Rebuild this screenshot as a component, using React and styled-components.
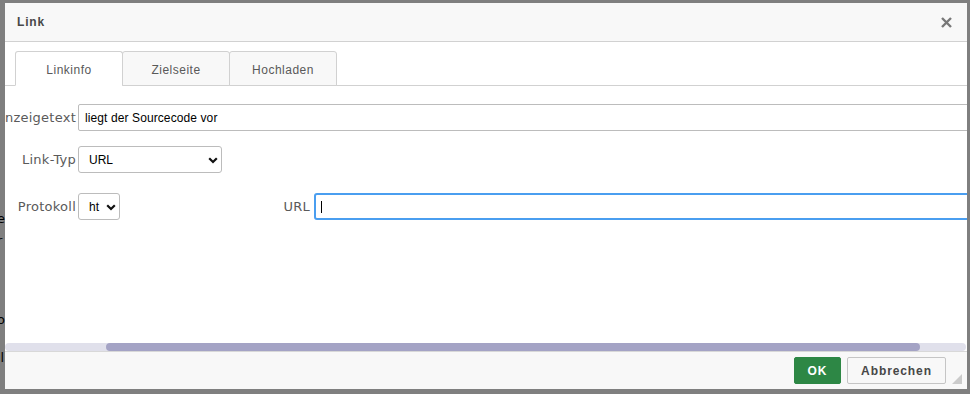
import React, { useLayoutEffect, useRef, useState } from 'react';
import styled, { createGlobalStyle } from 'styled-components';

const GlobalStyle = createGlobalStyle`
  html, body {
    margin: 0;
    padding: 0;
  }
  body {
    width: 970px;
    height: 394px;
    overflow: hidden;
    background: #fff;
    font-family: "Liberation Sans", Arial, sans-serif;
  }
`;

// bits of the page that peek out from behind the dialog
const pageLines = [
  { text: 'er', gap: 211 },
  { text: 'r', gap: 6 },
  { text: 'o', gap: 63 },
  { text: 'il', gap: 22 },
];

const Page = styled.div`
  display: flex;
  flex-direction: column;
  font-family: "DejaVu Sans", sans-serif;
  font-size: 13px;
  line-height: 16px;
  color: #000;
`;

const PageLine = styled.div`
  margin-top: ${(p) => p.$gap}px;
  margin-left: -3px;
`;

const Cover = styled.div`
  position: fixed;
  inset: 0;
  background: rgba(0, 0, 0, 0.5);
`;

const Dialog = styled.div`
  position: absolute;
  left: 5px;
  top: 3px;
  width: 962px;
  height: 386px;
  background: #fff;
  display: flex;
  flex-direction: column;
  overflow: hidden;
`;

const Header = styled.div`
  height: 38px;
  flex: none;
  display: flex;
  align-items: center;
  justify-content: space-between;
  padding: 0 15px 0 12px;
  background: #f8f8f8;
  border-bottom: 1px solid #d1d1d1;
`;

const Title = styled.div`
  font-size: 12px;
  font-weight: bold;
  letter-spacing: 0.8px;
  color: #484848;
`;

const CloseIcon = () => (
  <svg width="11" height="11" viewBox="0 0 11 11">
    <path d="M1 1 L10 10 M10 1 L1 10" stroke="#787878" strokeWidth="2.4" />
  </svg>
);

const TabBar = styled.div`
  flex: none;
  display: flex;
  padding: 9px 0 0 10px;
  border-bottom: 1px solid #d1d1d1;
`;

const Tab = styled.div`
  box-sizing: border-box;
  width: 108px;
  height: 35px;
  margin-bottom: -1px;
  margin-left: ${(p) => (p.$first ? 0 : -1)}px;
  display: flex;
  align-items: center;
  justify-content: center;
  padding-top: 3px;
  border: 1px solid #d1d1d1;
  border-bottom-color: ${(p) => (p.$active ? '#fff' : '#d1d1d1')};
  border-radius: 3px 3px 0 0;
  background: ${(p) => (p.$active ? '#fff' : '#f8f8f8')};
  font-size: 12px;
  letter-spacing: 0.5px;
  color: #595959;
`;

const ScrollArea = styled.div`
  flex: none;
  height: 257px;
  overflow-x: hidden;
  overflow-y: hidden;
`;

const ScrollTrack = styled.div`
  flex: none;
  height: 8px;
  margin-right: 1px;
  border-radius: 4px;
  background: #e0e0eb;
  display: flex;
`;

const ScrollThumb = styled.div`
  height: 8px;
  border-radius: 4px;
  background: #a4a3c5;
`;

const Form = styled.div`
  box-sizing: border-box;
  width: 1135px;
  padding: 18px 10px 0 0;
  display: flex;
  flex-direction: column;
`;

const Row = styled.div`
  display: grid;
  grid-template-columns: 190px 1fr;
  column-gap: 2px;
  align-items: center;
  margin-top: ${(p) => p.$gap || 0}px;
`;

const Label = styled.label`
  text-align: right;
  width: ${(p) => (p.$w ? `${p.$w}px` : 'auto')};
  flex: none;
  white-space: nowrap;
  font-family: "DejaVu Sans", sans-serif;
  font-size: 13px;
  letter-spacing: 0.25px;
  color: #5a5a5a;
`;

const TextInput = styled.input`
  box-sizing: border-box;
  height: 27px;
  width: 100%;
  padding: 0 6px;
  border: 1px solid #bcbcbc;
  border-radius: 2px;
  background: #fff;
  outline: none;
  font-family: "Liberation Sans", Arial, sans-serif;
  font-size: 12px;
  letter-spacing: 0.1px;
  color: #000;
`;

const SelectWrap = styled.div`
  position: relative;
  width: ${(p) => p.$w}px;
  flex: none;
`;

const Select = styled.select`
  appearance: none;
  box-sizing: border-box;
  width: 100%;
  height: 27px;
  padding: 0 0 0 10px;
  border: 1px solid #bcbcbc;
  border-radius: 3px;
  background: #fff;
  outline: none;
  font-family: "Liberation Sans", Arial, sans-serif;
  font-size: 12px;
  color: #000;
`;

const ChevronBox = styled.svg`
  position: absolute;
  right: 4px;
  top: 11px;
  pointer-events: none;
`;

const Chevron = () => (
  <ChevronBox width="10" height="7" viewBox="0 0 10 7">
    <path d="M1.2 1.2 L5 5 L8.8 1.2" fill="none" stroke="#111" strokeWidth="2.2" />
  </ChevronBox>
);

const FieldLine = styled.div`
  display: flex;
  align-items: center;
`;

const ProtoCell = styled.div`
  width: 190px;
  flex: none;
`;

const UrlField = styled.div`
  box-sizing: border-box;
  flex: 1;
  height: 27px;
  margin-left: 4px;
  padding-left: 5px;
  display: flex;
  align-items: center;
  border: 2px solid #4a9ef0;
  border-radius: 3px;
  background: #fff;
`;

const Caret = styled.span`
  width: 1px;
  height: 12px;
  background: #000;
`;

const Footer = styled.div`
  position: relative;
  flex: 1;
  display: flex;
  justify-content: flex-end;
  align-items: flex-start;
  gap: 6px;
  padding: 5px 21px 0 0;
  background: #f8f8f8;
  border-top: 1px solid #d8d8d8;
`;

const Button = styled.button`
  box-sizing: border-box;
  height: 27px;
  width: ${(p) => p.$w}px;
  border-radius: 2px;
  border: 1px solid ${(p) => (p.$primary ? '#2d8745' : '#c5c5c5')};
  background: ${(p) => (p.$primary ? '#2d8745' : '#f8f8f8')};
  color: ${(p) => (p.$primary ? '#fff' : '#474747')};
  font-family: "Liberation Sans", Arial, sans-serif;
  font-size: 12px;
  font-weight: bold;
  letter-spacing: 0.9px;
  padding: 0;
`;

const Grip = styled.div`
  position: absolute;
  right: 5px;
  bottom: 5px;
  width: 0;
  height: 0;
  border-left: 10px solid transparent;
  border-bottom: 10px solid #cbcbcb;
`;

const tabs = ['Linkinfo', 'Zielseite', 'Hochladen'];
const SCROLL_LEFT = 119;

export default function App() {
  const scrollRef = useRef(null);
  const [thumb, setThumb] = useState({ left: 0, width: 0 });

  useLayoutEffect(() => {
    const el = scrollRef.current;
    if (!el) return;
    el.scrollLeft = SCROLL_LEFT;
    const track = el.clientWidth - 1;
    const ratio = track / el.scrollWidth;
    setThumb({ left: el.scrollLeft * ratio, width: el.clientWidth * ratio });
  }, []);

  return (
    <>
      <GlobalStyle />
      <Page>
        {pageLines.map((line, i) => (
          <PageLine key={i} $gap={line.gap}>{line.text}</PageLine>
        ))}
      </Page>
      <Cover />
      <Dialog>
        <Header>
          <Title>Link</Title>
          <CloseIcon />
        </Header>
        <TabBar>
          {tabs.map((t, i) => (
            <Tab key={t} $first={i === 0} $active={i === 0}>{t}</Tab>
          ))}
        </TabBar>
        <ScrollArea ref={scrollRef}>
          <Form>
            <Row>
              <Label>Anzeigetext</Label>
              <TextInput defaultValue="liegt der Sourcecode vor" />
            </Row>
            <Row $gap={15}>
              <Label>Link-Typ</Label>
              <SelectWrap $w={144}>
                <Select defaultValue="url">
                  <option value="url">URL</option>
                  <option value="anchor">Link zu Anker im Text</option>
                  <option value="email">E-Mail</option>
                </Select>
                <Chevron />
              </SelectWrap>
            </Row>
            <Row $gap={20}>
              <Label>Protokoll</Label>
              <FieldLine>
                <ProtoCell>
                  <SelectWrap $w={42}>
                    <Select defaultValue="http">
                      <option value="http">ht</option>
                      <option value="https">https://</option>
                    </Select>
                    <Chevron />
                  </SelectWrap>
                </ProtoCell>
                <Label $w={42}>URL</Label>
                <UrlField>
                  <Caret />
                </UrlField>
              </FieldLine>
            </Row>
          </Form>
        </ScrollArea>
        <ScrollTrack>
          <ScrollThumb style={{ marginLeft: thumb.left, width: thumb.width }} />
        </ScrollTrack>
        <Footer>
          <Button $primary $w={47}>OK</Button>
          <Button $w={99}>Abbrechen</Button>
          <Grip />
        </Footer>
      </Dialog>
    </>
  );
}
